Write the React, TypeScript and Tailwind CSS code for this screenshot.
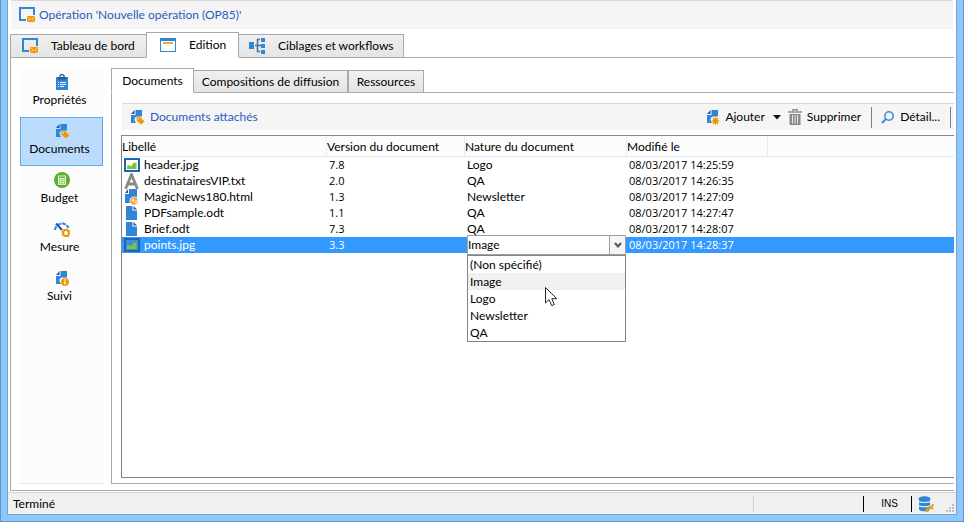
import React, { useState } from 'react';

interface DocumentJoint {
  id: number;
  libelle: string;
  version: string;
  nature: string;
  modifie: string;
  type: 'image' | 'texte' | 'html' | 'odt';
}

const documentsInitiaux: DocumentJoint[] = [
  { id: 1, libelle: 'header.jpg', version: '7.8', nature: 'Logo', modifie: '08/03/2017 14:25:59', type: 'image' },
  { id: 2, libelle: 'destinatairesVIP.txt', version: '2.0', nature: 'QA', modifie: '08/03/2017 14:26:35', type: 'texte' },
  { id: 3, libelle: 'MagicNews180.html', version: '1.3', nature: 'Newsletter', modifie: '08/03/2017 14:27:09', type: 'html' },
  { id: 4, libelle: 'PDFsample.odt', version: '1.1', nature: 'QA', modifie: '08/03/2017 14:27:47', type: 'odt' },
  { id: 5, libelle: 'Brief.odt', version: '7.3', nature: 'QA', modifie: '08/03/2017 14:28:07', type: 'odt' },
  { id: 6, libelle: 'points.jpg', version: '3.3', nature: 'Image', modifie: '08/03/2017 14:28:37', type: 'image' },
];

const natures = ['(Non spécifié)', 'Image', 'Logo', 'Newsletter', 'QA'];

const Icone: React.FC<{ children: React.ReactNode }> = ({ children }) => (
  <svg width="16" height="16" viewBox="0 0 16 16" className="block shrink-0" aria-hidden="true">
    {children}
  </svg>
);

const IconeOperation = () => (
  <Icone>
    <path d="M15 8V1H1v12h6" fill="none" stroke="#2f86d6" strokeWidth="2" />
    <path d="M8 9h8v6H8z" fill="#f09609" />
    <path d="M8 9.5l4 3 4-3M8 15l3-3M16 15l-3-3" fill="none" stroke="#fbd08c" strokeWidth="0.8" />
  </Icone>
);

const IconeEdition = () => (
  <Icone>
    <path d="M0 1h16v14H0z" fill="#2f86d6" />
    <path d="M1 4h14v10H1z" fill="#fff" />
    <path d="M3 5h10v2H3z" fill="#f2ab3c" />
  </Icone>
);

const IconeWorkflow = () => (
  <Icone>
    <path d="M0 4h5v7H0zM12 0h4v4h-4zM12 6h4v4h-4zM12 12h4v4h-4z" fill="#2f86d6" />
    <path d="M6 7.5h6M11 1.5H8.5v12H11" fill="none" stroke="#4a6f9c" strokeWidth="1.5" />
  </Icone>
);

const IconeProprietes = () => (
  <Icone>
    <path d="M2 3h12v13H2z" fill="#2f86d6" />
    <path d="M4 3h8v2.5H4z" fill="#1f5c9c" />
    <path d="M6 3V1.5Q8-.5 10 1.5V3" fill="none" stroke="#1f5c9c" strokeWidth="1.3" />
    <path d="M4 8.5h1M6 8.5h6M4 10.5h1M6 10.5h6M4 12.5h1M6 12.5h4" stroke="#e8f2fc" strokeWidth="1" />
  </Icone>
);

// Feuille bleue au coin replié, commune à plusieurs icônes
const Feuille = () => (
  <>
    <path d="M6.500 1H13v6.500H9A3 3 0 0 0 5.500 11L7 14H2V6h4.500z" fill="#2f86d6" />
    <path d="M5.500 1v4H2z" fill="#1f5c9c" />
  </>
);

const IconeDocuments = () => (
  <Icone>
    <Feuille />
    <path d="M7.500 8H11l4.500 4.500L12 15.500l-4.500-4z" fill="#f09609" />
    <circle cx="9.200" cy="9.700" r="0.700" fill="#fff" />
  </Icone>
);

const IconeBudget = () => (
  <Icone>
    <circle cx="8" cy="8" r="8" fill="#5fae2d" />
    <path d="M4 3.500h8v9.500H4z" fill="#e6f4dc" />
    <path d="M5 4.500h6v1.500H5z" fill="#5fae2d" />
    <path d="M5 7.800h6M5 9.800h6M5 11.800h6" stroke="#5fae2d" strokeWidth="1.100" strokeDasharray="1.400 0.900" />
  </Icone>
);

const IconeMesure = () => (
  <Icone>
    <path d="M1 9A7 7 0 0 1 14.500 7" fill="none" stroke="#2f86d6" strokeWidth="2" strokeDasharray="4 1" />
    <path d="M2 2.500l6 6.500" stroke="#1f5c9c" strokeWidth="2" />
    <circle cx="12" cy="12" r="4" fill="#f09609" />
    <circle cx="12" cy="12" r="3.700" fill="none" stroke="#f09609" strokeDasharray="1.450 1.450" strokeWidth="1.600" />
    <circle cx="12" cy="12" r="1.900" fill="#fff" />
  </Icone>
);

const IconeSuivi = () => (
  <Icone>
    <Feuille />
    <circle cx="11" cy="12" r="4" fill="#f09609" />
    <path d="M11 9.300v1.200M11 11.300v3.200" stroke="#fff" strokeWidth="1.400" />
  </Icone>
);

const IconeAjouter = () => (
  <Icone>
    <Feuille />
    <circle cx="10.500" cy="12" r="2.700" fill="#f09609" />
    <path d="M10.500 8v8M6.500 12h8M7.700 9.200l5.600 5.600M13.300 9.200l-5.600 5.600" stroke="#f09609" strokeWidth="1.100" />
  </Icone>
);

const IconeSupprimer = () => (
  <Icone>
    <path d="M6 2V.5h4V2M1 3h14" fill="none" stroke="#8a8a8a" strokeWidth="1.600" />
    <path d="M2.500 5h11v11h-11z" fill="#8a8a8a" />
    <path d="M5.500 6v8.500M8 6v8.500M10.500 6v8.500" stroke="#e6e6e6" strokeWidth="1" />
  </Icone>
);

const IconeLoupe = () => (
  <Icone>
    <circle cx="9" cy="7" r="4.200" fill="none" stroke="#3f8fdc" strokeWidth="1.600" />
    <path d="M6 10l-4 4" stroke="#3f8fdc" strokeWidth="2.200" />
  </Icone>
);

const IconeBase = () => (
  <Icone>
    <path d="M1 3v10c0 3 11 3 11 0V3z" fill="#2f86d6" />
    <ellipse cx="6.500" cy="2.500" rx="6" ry="2.200" fill="#2f86d6" />
    <path d="M0 4.500c1 2.600 12 2.600 13 0M0 8.700c1 2.600 12 2.600 13 0" fill="none" stroke="#e6eef6" strokeWidth="1.100" />
    <path d="M15.500 8.500L10 14M13 11l2 2" stroke="#f09609" strokeWidth="1.800" />
    <circle cx="9.200" cy="14" r="2" fill="#f09609" />
  </Icone>
);

const IconeFichier: React.FC<{ type: DocumentJoint['type']; selection: boolean }> = ({ type, selection }) => {
  if (type === 'image') {
    return (
      <Icone>
        <path d="M1 2h14v12H1z" fill={selection ? '#3b8fd8' : '#fff'} stroke="#1f66b0" strokeWidth="2" />
        <path d="M3 12V9l2-1 2 1.500L10 5l1 1.500L12.500 5v7z" fill="#7fc241" />
      </Icone>
    );
  }
  if (type === 'texte') {
    return (
      <Icone>
        <path d="M1.500 16L7.500 1.500L13.500 16M4 11h7" fill="none" stroke="#8a8a8a" strokeWidth="2.800" />
      </Icone>
    );
  }
  if (type === 'html') {
    return (
      <Icone>
        <path d="M5 0h8v14H1V5h4z" fill="#2f86d6" />
        <path d="M4 0v4H1z" fill="#1f5c9c" />
        <circle cx="10" cy="12" r="4.500" fill="#fff" />
        <circle cx="10" cy="12" r="3.800" fill="#f2a53a" />
        <path d="M7.500 11l2-1.500 1 2-1 1.500zM11 13l1.500-2 .5 2-1.500 1.500z" fill="#fff" />
      </Icone>
    );
  }
  return (
    <Icone>
      <path d="M2 1h6.500v4.500H13V15H2z" fill="#2f86d6" />
      <path d="M9.500 1v3.500H13z" fill="#1f5c9c" />
    </Icone>
  );
};

const onglets = [
  { nom: 'Tableau de bord', icone: <IconeOperation />, taille: 'w-[136px] pl-[11px] gap-[13px]' },
  { nom: 'Edition', icone: <IconeEdition />, taille: 'w-[93px] pl-[13px] gap-[13px]' },
  { nom: 'Ciblages et workflows', icone: <IconeWorkflow />, taille: 'w-[165px] pl-[10px] gap-[13px]' },
];

const sousOnglets = [
  { nom: 'Documents', taille: 'w-[83px]' },
  { nom: 'Compositions de diffusion', taille: 'w-[155px] -ml-px' },
  { nom: 'Ressources', taille: 'w-[76px]' },
];

const rubriques = [
  { nom: 'Propriétés', icone: <IconeProprietes /> },
  { nom: 'Documents', icone: <IconeDocuments /> },
  { nom: 'Budget', icone: <IconeBudget /> },
  { nom: 'Mesure', icone: <IconeMesure /> },
  { nom: 'Suivi', icone: <IconeSuivi /> },
];

const App: React.FC = () => {
  const [documents, setDocuments] = useState<DocumentJoint[]>(documentsInitiaux);
  const [selection, setSelection] = useState<number>(6);
  const [listeOuverte, setListeOuverte] = useState<boolean>(true);
  const [onglet, setOnglet] = useState<string>('Edition');
  const [sousOnglet, setSousOnglet] = useState<string>('Documents');
  const [rubrique, setRubrique] = useState<string>('Documents');

  const changerNature = (id: number, nature: string) => {
    setDocuments(documents.map(d => (d.id === id ? { ...d, nature } : d)));
    setListeOuverte(false);
  };

  return (
    <div className="flex min-h-screen flex-col bg-white pr-3 pb-2.5 font-['Lato','Open_Sans',sans-serif] text-[12px] leading-4 text-black">
      <div className="flex flex-1 flex-col border border-t-0 border-[#6197c9] bg-[#8ec7fb] px-1.5 pb-1.5">
        <div className="flex flex-1 flex-col border border-t-0 border-[#6fa5d6] bg-white">
          <header className="mx-[3px] flex h-[29px] items-center gap-1 border-t border-[#d8d8d8] bg-[#f5f5f5] pl-2">
            <IconeOperation />
            <h1 className="text-[#2b5bc0]">Opération 'Nouvelle opération (OP85)'</h1>
          </header>

          <nav className="relative mt-[3px] -mb-px ml-0.5 flex h-[26px] items-end">
            {onglets.map(o => (
              <button
                key={o.nom}
                onClick={() => setOnglet(o.nom)}
                className={`flex items-center border border-[#a9a9a9] whitespace-nowrap ${o.taille} ${
                  onglet === o.nom
                    ? 'z-10 h-[26px] border-b-white bg-white'
                    : 'h-6 bg-linear-to-b from-[#f0f0f0] to-[#e4e4e4] first:border-r-0 last:border-l-0'
                }`}
              >
                {o.icone}
                {o.nom}
              </button>
            ))}
          </nav>

          <main className="mx-0.5 mb-px flex flex-1 gap-2 border border-r-0 border-[#a9a9a9] pt-2.5 pb-1.5 pl-[9px]">
            <aside className="w-[83px] shrink-0 border-b border-[#dfe8fb] bg-[#fcfcfc]">
              {rubriques.map(r => (
                <button
                  key={r.nom}
                  onClick={() => setRubrique(r.nom)}
                  className={`flex h-[49px] w-full flex-col items-center gap-0.5 border pt-[5px] ${
                    rubrique === r.nom ? 'border-[#66a7e8] bg-[#bbdcfc]' : 'border-transparent'
                  }`}
                >
                  {r.icone}
                  <span className="pr-1">{r.nom}</span>
                </button>
              ))}
            </aside>

            <section className="flex min-w-0 flex-1 flex-col">
              <nav className="relative -mb-px flex h-[25px] items-end">
                {sousOnglets.map(s => (
                  <button
                    key={s.nom}
                    onClick={() => setSousOnglet(s.nom)}
                    className={`border border-[#a9a9a9] text-center whitespace-nowrap ${s.taille} ${
                      sousOnglet === s.nom ? 'z-10 h-[25px] border-b-white bg-white' : 'h-[23px] bg-linear-to-b from-[#f0f0f0] to-[#e4e4e4]'
                    }`}
                  >
                    {s.nom}
                  </button>
                ))}
              </nav>

              <div className="flex flex-1 flex-col border border-r-0 border-[#a9a9a9] pt-2.5 pb-[5px] pl-[9px]">
                <div className="mb-[5px] ml-px flex h-[27px] items-center border-t border-[#d8d8d8] bg-[#f5f5f5] pr-[3px] pl-[7px]">
                  <IconeDocuments />
                  <h2 className="ml-[5px] flex-1 text-[#2b5bc0]">Documents attachés</h2>
                  <button className="flex items-center gap-1">
                    <IconeAjouter />
                    Ajouter
                  </button>
                  <button aria-label="Autres ajouts" className="mr-1 ml-1.5 flex h-5 items-center px-0.5">
                    <svg width="8" height="5" viewBox="0 0 8 5"><path d="M0 0h8L4 4.500z" fill="#111" /></svg>
                  </button>
                  <button className="flex items-center gap-1">
                    <IconeSupprimer />
                    Supprimer
                  </button>
                  <span className="mr-2 ml-2.5 h-[21px] w-px bg-[#808080]" />
                  <button className="flex items-center gap-1">
                    <IconeLoupe />
                    Détail...
                  </button>
                  <span className="ml-2.5 h-[21px] w-px bg-[#808080]" />
                </div>

                <div className="flex-1 border border-r-0 border-[#83838f]">
                  <table className="w-full table-fixed border-separate border-spacing-0 text-left whitespace-nowrap">
                    <colgroup>
                      <col className="w-[205px]" />
                      <col className="w-[138px]" />
                      <col className="w-[162px]" />
                      <col className="w-[141px]" />
                      <col />
                    </colgroup>
                    <thead>
                      <tr className="h-[21px] bg-[#fcfcfc] *:border-b *:border-[#e3edfb] *:pt-px *:font-normal">
                        <th className="border-r">Libellé</th>
                        <th className="border-r">Version du document</th>
                        <th className="border-r">Nature du document</th>
                        <th className="border-r">Modifié le</th>
                        <td />
                      </tr>
                    </thead>
                    <tbody>
                      {documents.map(doc => (
                        <tr
                          key={doc.id}
                          onClick={() => setSelection(doc.id)}
                          className={doc.id === selection ? 'h-4 bg-[#3399ff] text-white' : 'h-4'}
                        >
                          <td className="pl-0.5">
                            <div className="flex gap-1">
                              <IconeFichier type={doc.type} selection={doc.id === selection} />
                              {doc.libelle}
                            </div>
                          </td>
                          <td className="pl-0.5 font-['Open_Sans',sans-serif] text-[11px]">{doc.version}</td>
                          <td className="relative pl-0.5">
                            {doc.id === selection ? (
                              <div className="absolute -top-0.5 left-0.5 z-10 w-[159px] text-black">
                                <div className="relative">
                                  <select
                                    aria-label="Nature du document"
                                    value={doc.nature}
                                    onChange={e => changerNature(doc.id, e.target.value)}
                                    className="block h-5 w-full appearance-none border border-[#a0a0a0] bg-white leading-4"
                                  >
                                    {natures.map(n => (
                                      <option key={n}>{n}</option>
                                    ))}
                                  </select>
                                  <button
                                    aria-label="Ouvrir la liste"
                                    onClick={() => setListeOuverte(!listeOuverte)}
                                    className="absolute top-0 right-0 flex h-5 w-[17px] items-center justify-center border border-[#a0a0a0] bg-[#f5f5f5]"
                                  >
                                    <svg width="8" height="6" viewBox="0 0 8 6"><path d="M1 1l3 3.500L7 1" fill="none" stroke="#555" strokeWidth="2" /></svg>
                                  </button>
                                </div>
                                {listeOuverte && (
                                  <ul role="listbox" className="border border-[#83838f] bg-white leading-[18px]">
                                    {natures.map(n => (
                                      <li
                                        key={n}
                                        role="option"
                                        aria-selected={n === doc.nature}
                                        onClick={() => changerNature(doc.id, n)}
                                        className={n === doc.nature ? 'h-[17px] bg-[#f0f0f0] pl-0.5' : 'h-[17px] pl-0.5'}
                                      >
                                        {n}
                                      </li>
                                    ))}
                                  </ul>
                                )}
                                {listeOuverte && (
                                  <svg width="13" height="20" viewBox="0 0 13 20" className="pointer-events-none absolute top-[52px] left-[78px]">
                                    <path d="M.5.500v15.500l3.600-3.400 2.600 6 2.600-1.100-2.500-5.800h5z" fill="#fff" stroke="#22222c" />
                                  </svg>
                                )}
                              </div>
                            ) : (
                              doc.nature
                            )}
                          </td>
                          <td className="pl-0.5 font-['Open_Sans',sans-serif] text-[11px]">{doc.modifie}</td>
                          <td />
                        </tr>
                      ))}
                    </tbody>
                  </table>
                </div>
              </div>
            </section>
          </main>

          <footer className="flex h-[22px] items-center border-t border-[#d5d5d5] bg-[#f0f0f0] pr-0.5 pl-[5px]">
            <span className="flex-1">Terminé</span>
            <span className="h-4 w-px bg-[#d0d0d0]" />
            <span className="ml-[109px] h-4 w-px bg-black" />
            <span className="w-[47px] pl-1 text-center font-['Liberation_Sans',sans-serif] text-[10px]">INS</span>
            <span className="mr-1.5 h-4 w-px bg-black" />
            <IconeBase />
            <svg width="8" height="8" viewBox="0 0 8 8" className="mt-2 ml-3">
              <path d="M6 0h2v2H6zM3 3h2v2H3zM6 3h2v2H6zM0 6h2v2H0zM3 6h2v2H3zM6 6h2v2H6z" fill="#bdbdbd" />
            </svg>
          </footer>
        </div>
      </div>
    </div>
  );
};

export default App;
